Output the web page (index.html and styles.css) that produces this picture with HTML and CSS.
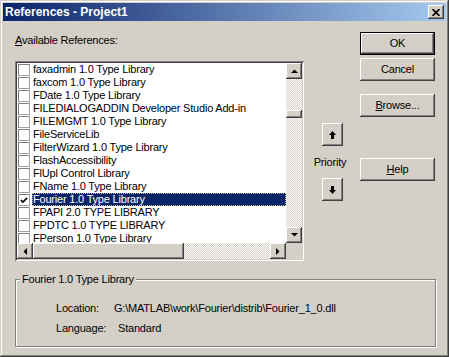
FILE: index.html
```html
<!DOCTYPE html>
<html>
<head>
<meta charset="utf-8">
<link rel="stylesheet" href="styles.css">
</head>
<body>
<div class="window">
  <div class="titlebar">
    <span class="title">References - Project1</span>
    <span class="close raised"><svg width="8" height="7" viewBox="0 0 8 7"><path d="M0.5 0 L7.5 7 M7.5 0 L0.5 7" stroke="#000" stroke-width="1.6" fill="none"/></svg></span>
  </div>
  <div class="client">
    <div class="top">
      <div class="leftcol">
        <div class="label"><u>A</u>vailable References:</div>
        <div class="listbox">
          <div class="listmain">
            <div class="items">
              <div class="item"><span class="cb"></span><span class="txt">faxadmin 1.0 Type Library</span></div>
              <div class="item"><span class="cb"></span><span class="txt">faxcom 1.0 Type Library</span></div>
              <div class="item"><span class="cb"></span><span class="txt">FDate 1.0 Type Library</span></div>
              <div class="item"><span class="cb"></span><span class="txt">FILEDIALOGADDIN Developer Studio Add-in</span></div>
              <div class="item"><span class="cb"></span><span class="txt">FILEMGMT 1.0 Type Library</span></div>
              <div class="item"><span class="cb"></span><span class="txt">FileServiceLib</span></div>
              <div class="item"><span class="cb"></span><span class="txt">FilterWizard 1.0 Type Library</span></div>
              <div class="item"><span class="cb"></span><span class="txt">FlashAccessibility</span></div>
              <div class="item"><span class="cb"></span><span class="txt">FlUpl Control Library</span></div>
              <div class="item"><span class="cb"></span><span class="txt">FName 1.0 Type Library</span></div>
              <div class="item selected"><span class="cb"><svg width="11" height="11" viewBox="0 0 11 11"><path d="M2 5 L4.3 7.3 L9 2.6" stroke="#000" stroke-width="1.8" fill="none"/></svg></span><span class="txt">Fourier 1.0 Type Library</span></div>
              <div class="item"><span class="cb"></span><span class="txt">FPAPI 2.0 TYPE LIBRARY</span></div>
              <div class="item"><span class="cb"></span><span class="txt">FPDTC 1.0 TYPE LIBRARY</span></div>
              <div class="item"><span class="cb"></span><span class="txt">FPerson 1.0 Type Library</span></div>
            </div>
            <div class="vscroll">
              <div class="sbtn raised"><svg width="7" height="4" viewBox="0 0 7 4"><polygon points="0,4 7,4 3.5,0.5" fill="#000"/></svg></div>
              <div class="track vtrack1"></div>
              <div class="vthumb raised"></div>
              <div class="track grow"></div>
              <div class="sbtn raised"><svg width="7" height="4" viewBox="0 0 7 4"><polygon points="0,0 7,0 3.5,3.5" fill="#000"/></svg></div>
            </div>
          </div>
          <div class="hrow">
            <div class="sbtn raised"><svg width="4" height="7" viewBox="0 0 4 7"><polygon points="4,0 4,7 0.5,3.5" fill="#000"/></svg></div>
            <div class="hthumb raised"></div>
            <div class="track grow"></div>
            <div class="sbtn raised"><svg width="4" height="7" viewBox="0 0 4 7"><polygon points="0,0 0,7 3.5,3.5" fill="#000"/></svg></div>
            <div class="corner"></div>
          </div>
        </div>
      </div>
      <div class="priority">
        <div class="arrowbtn raised up"><svg width="7" height="8" viewBox="0 0 7 8"><polygon points="3.5,0 7,4 5,4 5,8 2,8 2,4 0,4" fill="#000"/></svg></div>
        <div class="prlabel">Priority</div>
        <div class="arrowbtn raised down"><svg width="7" height="8" viewBox="0 0 7 8"><polygon points="3.5,8 7,4 5,4 5,0 2,0 2,4 0,4" fill="#000"/></svg></div>
      </div>
      <div class="buttons">
        <div class="btn default">OK</div>
        <div class="btn raised cancel">Cancel</div>
        <div class="btn raised browse"><u>B</u>rowse...</div>
        <div class="btn raised help"><u>H</u>elp</div>
      </div>
    </div>
    <div class="group">
      <span class="gtitle">Fourier 1.0 Type Library</span>
      <div class="grow-row loc"><span class="glabel">Location:</span><span class="gval">G:\MATLAB\work\Fourier\distrib\Fourier_1_0.dll</span></div>
      <div class="grow-row lang"><span class="glabel">Language:</span><span class="gval">Standard</span></div>
    </div>
  </div>
</div>
</body>
</html>
```

FILE: styles.css
```css
* { box-sizing: border-box; }
body {
  margin: 0;
  background: #d4d0c8;
  font-family: "Liberation Sans", Arial, sans-serif;
  font-size: 11px;
  letter-spacing: -0.2px;
  color: #000;
}
.window {
  width: 449px;
  height: 357px;
  padding: 3px;
  background: #d4d0c8;
  box-shadow: inset -1px -1px #404040, inset 1px 1px #d4d0c8, inset -2px -2px #808080, inset 2px 2px #fff;
  display: flex;
  flex-direction: column;
}
.raised {
  background: #d4d0c8;
  box-shadow: inset -1px -1px #404040, inset 1px 1px #fff, inset -2px -2px #808080, inset 2px 2px #d4d0c8;
}
.titlebar {
  height: 18px;
  background: linear-gradient(to right, #0a246a, #a6caf0);
  display: flex;
  align-items: center;
  justify-content: space-between;
  padding: 0 2px 0 2px;
}
.title {
  color: #fff;
  font-weight: bold;
  font-size: 12px;
  letter-spacing: 0;
}
.close {
  width: 16px;
  height: 14px;
  display: flex;
  align-items: center;
  justify-content: center;
}
.client {
  flex: 1;
  padding: 11px 0 0 12px;
}
.top {
  display: flex;
  align-items: flex-start;
}
.leftcol {
  width: 289px;
  padding-top: 2px;
}
.label {
  line-height: 13px;
  margin-bottom: 14px;
}
.listbox {
  width: 289px;
  height: 200px;
  padding: 2px;
  background: #fff;
  box-shadow: inset 1px 1px #808080, inset -1px -1px #fff, inset 2px 2px #404040, inset -2px -2px #d4d0c8;
}
.listmain {
  display: flex;
  height: 180px;
}
.items {
  width: 269px;
  height: 180px;
  overflow: hidden;
}
.item {
  height: 13px;
  display: flex;
  align-items: flex-start;
  white-space: nowrap;
}
.cb {
  width: 12px;
  height: 12px;
  margin: 1px 1px 0 1px;
  background: #fff;
  border: 1px solid #a0a0a0;
  border-top-color: #808080;
  border-left-color: #808080;
  display: flex;
  align-items: center;
  justify-content: center;
  flex: none;
}
.txt {
  flex: 1;
  height: 13px;
  line-height: 13px;
  padding-left: 1px;
  margin-left: 1px;
}
.selected .txt {
  background: #0a246a;
  color: #fff;
  outline: 1px dotted #c8c080;
  outline-offset: -1px;
}
.vscroll {
  width: 16px;
  display: flex;
  flex-direction: column;
}
.sbtn {
  width: 16px;
  height: 16px;
  flex: none;
  display: flex;
  align-items: center;
  justify-content: center;
}
.track {
  background: repeating-conic-gradient(#fff 0 25%, #d4d0c8 0 50%) 0 0 / 2px 2px;
}
.vtrack1 { height: 31px; }
.grow { flex: 1; }
.vthumb { height: 8px; flex: none; }
.hrow {
  display: flex;
  height: 16px;
}
.hthumb { width: 151px; flex: none; }
.corner {
  width: 16px;
  background: #d4d0c8;
}
.priority {
  width: 56px;
  display: flex;
  flex-direction: column;
  align-items: center;
}
.arrowbtn {
  width: 21px;
  height: 23px;
  display: flex;
  align-items: center;
  justify-content: center;
}
.arrowbtn.up { margin-top: 91px; }
.prlabel {
  line-height: 13px;
  margin: 10px 0 9px 0;
  padding-right: 4px;
}
.buttons {
  width: 75px;
  display: flex;
  flex-direction: column;
}
.btn {
  width: 75px;
  height: 23px;
  display: flex;
  align-items: center;
  justify-content: center;
  padding-bottom: 1px;
}
.btn.default {
  background: #d4d0c8;
  box-shadow: inset 0 0 0 1px #000, inset -2px -2px #404040, inset 2px 2px #fff, inset -3px -3px #808080;
}
.cancel { margin-top: 3px; }
.browse { margin-top: 13px; }
.help { margin-top: 41px; }
.group {
  width: 421px;
  margin-top: 18px;
  border: 1px solid #808080;
  box-shadow: inset 1px 1px #fff, 1px 1px #fff;
  padding: 0 0 11px 0;
}
.gtitle {
  display: inline-block;
  line-height: 13px;
  margin: -7px 0 0 4px;
  padding: 0 2px;
  background: #d4d0c8;
  vertical-align: top;
}
.grow-row {
  display: flex;
  line-height: 13px;
  padding-left: 40px;
}
.loc { margin-top: 10px; }
.lang { margin-top: 7px; }
.glabel { width: 58px; }
.lang .glabel { width: 62px; }
```
